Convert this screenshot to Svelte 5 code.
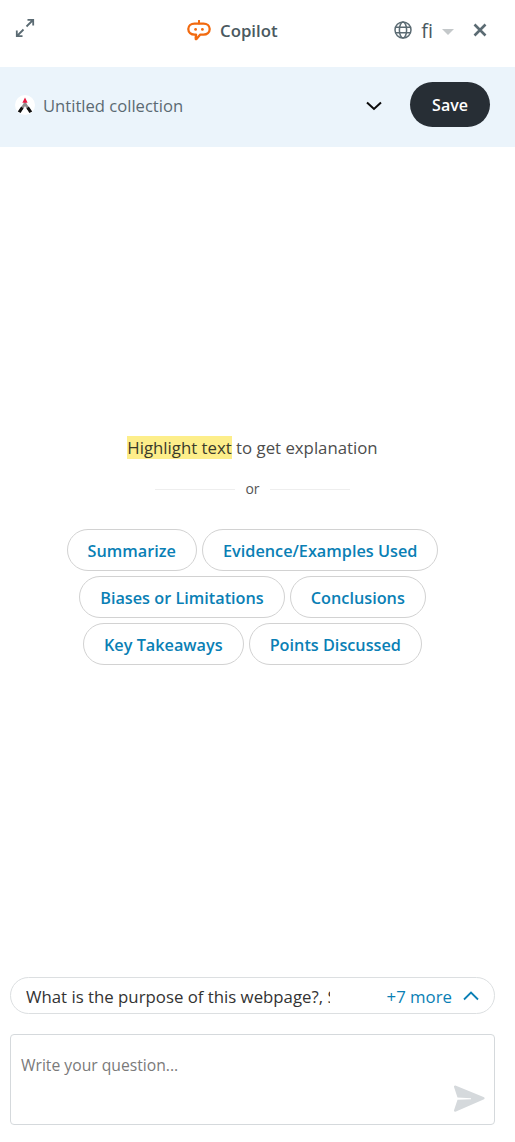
<script>
  const chips = [
    'Summarize',
    'Evidence/Examples Used',
    'Biases or Limitations',
    'Conclusions',
    'Key Takeaways',
    'Points Discussed'
  ];
</script>

<div class="panel">
  <header class="top">
    <button class="icon expand" aria-label="Expand">
      <svg width="20" height="20" viewBox="0 0 20 20" fill="none" stroke="#5b6b73" stroke-width="1.8">
        <path d="M11.500 8.500 18 2M12.500 1.800h5.700v5.700M8.500 11.500 2 18M1.800 12.500v5.700h5.700" />
      </svg>
    </button>
    <div class="brand">
      <svg width="24" height="22" viewBox="0 0 24 22" fill="none">
        <path d="M12 .8v2.700" stroke="#f26a0f" stroke-width="2" stroke-linecap="round" />
        <path d="M7.500 3.600h9c3.500 0 6.200 2.300 6.200 5.500s-2.700 5.500-6.200 5.500h-3.200l-3.800 4.300c-.5.500-1 .2-.9-.4l.5-3.900H7.500c-3.500 0-6.200-2.300-6.200-5.500s2.700-5.500 6.200-5.500Z" stroke="#f26a0f" stroke-width="2.300" stroke-linejoin="round" />
        <circle cx="8.600" cy="9.400" r="1.400" fill="#f26a0f" />
        <circle cx="15.400" cy="9.400" r="1.400" fill="#f26a0f" />
      </svg>
      <span>Copilot</span>
    </div>
    <div class="tools">
      <svg class="globe" width="18" height="18" viewBox="0 0 18 18" fill="none" stroke="#5b6b73" stroke-width="1.500">
        <circle cx="9" cy="9" r="8" />
        <ellipse cx="9" cy="9" rx="3.600" ry="8" />
        <path d="M1.500 6.300h15M1.500 11.700h15" />
      </svg>
      <span class="lang">fi</span>
      <span class="caret"></span>
      <button class="icon close" aria-label="Close">
        <svg width="14" height="14" viewBox="0 0 14 14" fill="none" stroke="#5b6b73" stroke-width="2.600">
          <path d="M1.500 1.500l11 11M12.500 1.500l-11 11" />
        </svg>
      </button>
    </div>
  </header>

  <div class="collection">
    <svg class="logo" width="20" height="20" viewBox="0 0 20 20">
      <circle cx="10" cy="10" r="10" fill="#fff" />
      <path d="M10 6 4.500 15h3.200L10 11l2.300 4h3.200Z" fill="#8e8e8e" />
      <path d="M6.200 11.500 2.800 16.500l2.800 1.500 2.800-4.600ZM13.800 11.500l3.400 5-2.800 1.500-2.800-4.600Z" fill="#111" />
      <path d="M10 2.500 7.400 7.800h5.200Z" fill="#e8173f" />
    </svg>
    <span class="name">Untitled collection</span>
    <svg class="chev" width="16" height="10" viewBox="0 0 16 10" fill="none" stroke="#0b0b0b" stroke-width="2">
      <path d="M1 1.500l7 6.500 7-6.500" />
    </svg>
    <button class="save">Save</button>
  </div>

  <main class="middle">
    <p class="hint"><mark>Highlight text</mark> to get explanation</p>
    <div class="or"><i></i><span>or</span><i></i></div>
    <div class="chips">
      {#each chips as chip}
        <button class="chip">{chip}</button>
      {/each}
    </div>
  </main>

  <div class="bottom">
    <div class="suggest">
      <span class="q">What is the purpose of this webpage?, Summarize this</span>
      <span class="more">+7 more</span>
      <svg width="16" height="10" viewBox="0 0 16 10" fill="none" stroke="#0a7fb5" stroke-width="1.800">
        <path d="M1 8.500l7-7 7 7" />
      </svg>
    </div>
    <div class="ask">
      <span class="ph">Write your question...</span>
      <svg class="send" width="32" height="28" viewBox="0 0 32 28">
        <path d="M3 .8 30.500 12c1.500.7 1.500 1.800 0 2.500L3 26.600c-1.500.6-2.300-.2-1.900-1.500l3.400-10.400 13.500-.5v-1L4.500 12.500 1.100 2.300C.7 1 1.500.2 3 .8Z" fill="#d5d9dc" />
      </svg>
    </div>
  </div>
</div>

<style>
  :global(body) {
    margin: 0;
    background: #fff;
  }

  .panel {
    height: 1142px;
    display: flex;
    flex-direction: column;
    font-family: "Open Sans", "Noto Sans", sans-serif;
    color: #4a5960;
  }

  button {
    font: inherit;
    background: none;
    border: 0;
    padding: 0;
    cursor: pointer;
  }

  .top {
    height: 67px;
    flex: none;
    display: flex;
    align-items: flex-start;
    position: relative;
    padding: 18px 28px 0 15px;
    box-sizing: border-box;
  }

  .icon {
    display: flex;
  }

  .brand {
    position: absolute;
    left: 187px;
    top: 20px;
    display: flex;
    align-items: center;
    gap: 9px;
    font-size: 16.800px;
    font-weight: 600;
    line-height: 22px;
  }

  .tools {
    margin-left: auto;
    display: flex;
    align-items: center;
    height: 24px;
  }

  .lang {
    margin-left: 9px;
    font-size: 20px;
  }

  .caret {
    margin-left: 9px;
    margin-top: 3px;
    border: 6px solid transparent;
    border-top: 6px solid #c4c8ca;
    border-bottom: 0;
  }

  .close {
    margin-left: 19px;
  }

  .collection {
    height: 80px;
    flex: none;
    background: #ebf4fb;
    display: flex;
    align-items: center;
    padding: 0 25px 4px 15px;
    box-sizing: border-box;
  }

  .name {
    margin-left: 8px;
    font-size: 16.600px;
    color: #5b6a72;
  }

  .chev {
    margin-left: auto;
    margin-right: 28px;
    margin-top: 2px;
  }

  .save {
    width: 80px;
    height: 45px;
    margin-bottom: 1px;
    border-radius: 23px;
    background: #272e35;
    color: #fff;
    font-size: 16px;
    font-weight: 600;
  }

  .middle {
    flex: 1;
    display: flex;
    flex-direction: column;
    align-items: center;
    padding: 289px 10px 0 0;
  }

  .hint {
    margin: 0;
    font-size: 16.800px;
    line-height: 24px;
    color: #4d4d4d;
  }

  mark {
    background: #fdee8a;
    color: #3a3a2a;
  }

  .or {
    display: flex;
    align-items: center;
    gap: 10px;
    margin-top: 19px;
    font-size: 14px;
    color: #555;
    line-height: 20px;
  }

  .or i {
    width: 80px;
    height: 1px;
    background: #eee;
  }

  .chips {
    margin-top: 30px;
    width: 400px;
    display: flex;
    flex-wrap: wrap;
    justify-content: center;
    gap: 5px;
  }

  .chip {
    height: 42px;
    padding: 2px 20px 0;
    border: 1px solid #d2d2d2;
    border-radius: 21px;
    color: #0a7fb5;
    font-size: 16.250px;
    font-weight: 600;
    white-space: nowrap;
    background: #fff;
  }

  .bottom {
    flex: none;
    padding: 0 20px 17px 10px;
    display: flex;
    flex-direction: column;
    gap: 20px;
  }

  .suggest {
    height: 37px;
    box-sizing: border-box;
    border: 1px solid #dcdfe1;
    border-radius: 19px;
    display: flex;
    align-items: center;
    padding: 1px 15px 0;
  }

  .q {
    width: 304px;
    overflow: hidden;
    white-space: nowrap;
    font-size: 16.800px;
    color: #333;
  }

  .more {
    margin-left: auto;
    margin-right: 11px;
    font-size: 16.800px;
    color: #0a7fb5;
  }

  .ask {
    height: 91px;
    box-sizing: border-box;
    border: 1px solid #d5d9dc;
    border-radius: 4px;
    position: relative;
    padding: 19px 10px;
  }

  .ph {
    font-size: 15.700px;
    color: #7a7a7a;
  }

  .send {
    position: absolute;
    right: 9px;
    bottom: 11px;
  }
</style>
